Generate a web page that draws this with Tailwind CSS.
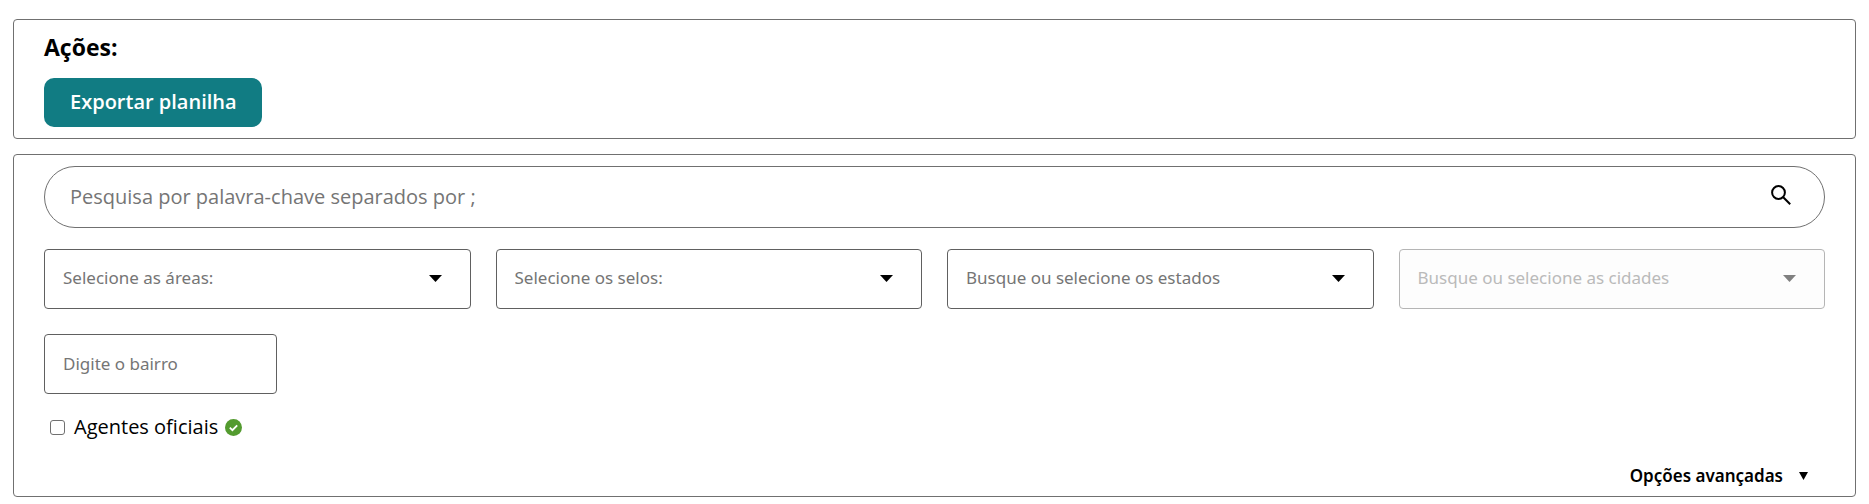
<!DOCTYPE html>
<html lang="pt-BR">
<head>
<meta charset="utf-8">
<meta name="viewport" content="width=device-width, initial-scale=1">
<title>Agentes</title>
<script src="https://cdn.jsdelivr.net/npm/@tailwindcss/browser@4"></script>
</head>
<body class="bg-white font-['Open_Sans','Noto_Sans',sans-serif] text-black">
<main class="flex flex-col gap-[15px] px-[13px] pt-[19px] pb-2">
  <section class="rounded border border-[#707070] px-[30px] pt-[11px] pb-[11px]">
    <h2 class="mb-[15px] text-[23px] leading-8 font-bold">Ações:</h2>
    <button type="button" class="block h-[49px] rounded-[10px] bg-[#117c83] pr-[25px] pb-[2px] pl-[26px] text-xl font-semibold text-white">Exportar planilha</button>
  </section>

  <section class="rounded border border-[#707070] px-[30px] pt-[11px] pb-[6px]">
    <form>
      <div class="flex h-[62px] items-center rounded-full border border-[#707070] pr-[33px] pl-[25px]">
        <input type="search" aria-label="Pesquisa por palavra-chave" placeholder="Pesquisa por palavra-chave separados por ;" class="min-w-0 flex-1 bg-transparent text-xl outline-none placeholder:text-[#757575]">
        <button type="submit" aria-label="Pesquisar" class="pb-1">
          <svg class="size-5" viewBox="0 0 20 20" fill="none" stroke="#000" stroke-width="2" aria-hidden="true"><circle cx="7.500" cy="7.500" r="6.400"/><path d="M12 12l7.200 7.200"/></svg>
        </button>
      </div>

      <div class="mt-[21px] grid grid-cols-4 gap-[25px]">
        <div class="relative">
          <select aria-label="Áreas" class="block h-[60px] w-full appearance-none rounded border border-[#606060] bg-white px-[18px] pb-[2px] font-['Noto_Sans'] text-[17px] text-[#757575]"><option>Selecione as áreas:</option></select>
          <svg class="pointer-events-none absolute top-[26px] right-[29px] h-[7px] w-[13px]" viewBox="0 0 13 7" aria-hidden="true"><path d="M0 0h13L6.500 7z"/></svg>
        </div>
        <div class="relative">
          <select aria-label="Selos" class="block h-[60px] w-full appearance-none rounded border border-[#606060] bg-white px-[18px] pb-[2px] font-['Noto_Sans'] text-[17px] text-[#757575]"><option>Selecione os selos:</option></select>
          <svg class="pointer-events-none absolute top-[26px] right-[29px] h-[7px] w-[13px]" viewBox="0 0 13 7" aria-hidden="true"><path d="M0 0h13L6.500 7z"/></svg>
        </div>
        <div class="relative">
          <select aria-label="Estados" class="block h-[60px] w-full appearance-none rounded border border-[#606060] bg-white px-[18px] pb-[2px] font-['Noto_Sans'] text-[17px] text-[#757575]"><option>Busque ou selecione os estados</option></select>
          <svg class="pointer-events-none absolute top-[26px] right-[29px] h-[7px] w-[13px]" viewBox="0 0 13 7" aria-hidden="true"><path d="M0 0h13L6.500 7z"/></svg>
        </div>
        <div class="relative">
          <select aria-label="Cidades" disabled class="block h-[60px] w-full appearance-none rounded border border-[#b5b5b5] bg-[#fdfdfd] px-[18px] pb-[2px] font-['Noto_Sans'] text-[17px] text-[#bababa] opacity-100"><option>Busque ou selecione as cidades</option></select>
          <svg class="pointer-events-none absolute top-[26px] right-[29px] h-[7px] w-[13px]" viewBox="0 0 13 7" fill="#808080" aria-hidden="true"><path d="M0 0h13L6.500 7z"/></svg>
        </div>
      </div>

      <input type="text" aria-label="Bairro" placeholder="Digite o bairro" class="mt-[25px] block h-[60px] w-[233px] rounded border border-[#606060] px-[18px] pb-[2px] font-['Noto_Sans'] text-[17px] placeholder:text-[#757575]">

      <div class="mt-[19px] flex items-center pl-[6px]">
        <input id="oficiais" type="checkbox" class="size-[15px] appearance-none rounded-[3px] border border-[#707070] bg-white checked:bg-[#117c83]">
        <label for="oficiais" class="ml-[9px] flex items-center gap-[7px] text-xl">Agentes oficiais
          <svg class="size-[17px]" viewBox="0 0 17 17" aria-hidden="true"><circle cx="8.500" cy="8.500" r="8.500" fill="#539b2f"/><path d="M4.800 8.700l2.600 2.500 4.800-4.900" fill="none" stroke="#fff" stroke-width="1.800"/></svg>
        </label>
      </div>

      <div class="mt-[21px] flex justify-end pr-[17px]">
        <button type="button" class="flex items-center gap-4 font-['Noto_Sans'] text-[17px] leading-7 font-semibold">Opções avançadas
          <svg class="h-2 w-[9px]" viewBox="0 0 9 8" aria-hidden="true"><path d="M0 0h9L4.500 8z"/></svg>
        </button>
      </div>
    </form>
  </section>
</main>
</body>
</html>
